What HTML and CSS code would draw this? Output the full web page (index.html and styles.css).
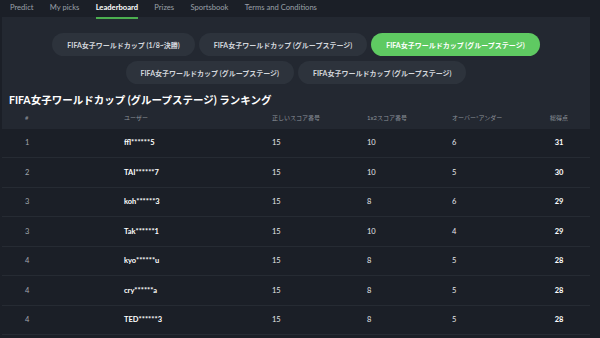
FILE: index.html
```html
<!DOCTYPE html>
<html lang="ja">
  <head>
    <meta charset="UTF-8">
    <title>Leaderboard</title>
    <link rel="stylesheet" href="styles.css">
  </head>
  <body>
    <nav class="tabs">
      <a class="tab">Predict</a>
      <a class="tab">My picks</a>
      <a class="tab active">Leaderboard</a>
      <a class="tab">Prizes</a>
      <a class="tab">Sportsbook</a>
      <a class="tab">Terms and Conditions</a>
    </nav>

    <main class="board">
      <section class="panel">
        <div class="rounds">
          <button class="round">FIFA女子ワールドカップ (1/8~決勝)</button>
          <button class="round">FIFA女子ワールドカップ (グループステージ)</button>
          <button class="round selected">FIFA女子ワールドカップ (グループステージ)</button>
          <button class="round">FIFA女子ワールドカップ (グループステージ)</button>
          <button class="round">FIFA女子ワールドカップ (グループステージ)</button>
        </div>
        <h2>FIFA女子ワールドカップ (グループステージ) ランキング</h2>
        <div class="row head">
          <span>#</span>
          <span>ユーザー</span>
          <span>正しいスコア番号</span>
          <span>1x2スコア番号</span>
          <span>オーバー*アンダー</span>
          <span class="pts">総得点</span>
        </div>
      </section>

      <div class="rows">
        <div class="row"><span class="rank">1</span><span class="user">ffl******5</span><span>15</span><span>10</span><span>6</span><span class="pts">31</span></div>
        <div class="row"><span class="rank">2</span><span class="user">TAI******7</span><span>15</span><span>10</span><span>5</span><span class="pts">30</span></div>
        <div class="row"><span class="rank">3</span><span class="user">koh******3</span><span>15</span><span>8</span><span>6</span><span class="pts">29</span></div>
        <div class="row"><span class="rank">3</span><span class="user">Tak******1</span><span>15</span><span>10</span><span>4</span><span class="pts">29</span></div>
        <div class="row"><span class="rank">4</span><span class="user">kyo******u</span><span>15</span><span>8</span><span>5</span><span class="pts">28</span></div>
        <div class="row"><span class="rank">4</span><span class="user">cry******a</span><span>15</span><span>8</span><span>5</span><span class="pts">28</span></div>
        <div class="row"><span class="rank">4</span><span class="user">TED******3</span><span>15</span><span>8</span><span>5</span><span class="pts">28</span></div>
      </div>
    </main>
  </body>
</html>
```

FILE: styles.css
```css
body {
  margin: 0;
  background: #1b1f27;
  color: #e6e8eb;
  font-family: Lato, "Noto Sans CJK JP", sans-serif;
  overflow: hidden;
}

.tabs {
  height: 17px;
  display: flex;
  gap: 16.3px;
  padding-left: 10px;
}

.tab {
  font-size: 7.6px;
  line-height: 14px;
  color: #9aa0a8;
  position: relative;
}

.tab.active {
  color: #ffffff;
  font-weight: 700;
}

.tab.active::after {
  content: "";
  position: absolute;
  left: 0;
  right: 0;
  bottom: -2px;
  height: 2px;
  background: #4caf50;
}

.board {
  width: 588px;
  margin-left: 2px;
}

.panel {
  background: #232831;
  padding-top: 16px;
}

.rounds {
  display: flex;
  flex-wrap: wrap;
  justify-content: center;
  gap: 5px 4px;
}

.round {
  height: 23px;
  padding: 0 15px;
  border: 0;
  border-radius: 12px;
  background: #2d333c;
  color: #d4d7dc;
  font-family: inherit;
  font-size: 7px;
  font-weight: 700;
}

.round.selected {
  background: #5fca62;
  color: #ffffff;
}

h2 {
  margin: 9px 0 0 7px;
  font-size: 10.5px;
  line-height: 14px;
  font-weight: 700;
  color: #ffffff;
}

.row {
  display: grid;
  grid-template-columns: 99px 148px 95px 85px 77px 60px;
  padding-left: 23px;
  align-items: center;
  height: 28.5px;
  border-bottom: 1px solid #262b33;
  font-size: 7.5px;
}

.row.head {
  height: 21.5px;
  border: 0;
  font-size: 6px;
  color: #8d939b;
}

.rank {
  color: #a3a8af;
}

.user, .pts {
  font-weight: 700;
  color: #ffffff;
}

.pts {
  text-align: center;
}

.head .pts {
  color: #8d939b;
  font-weight: 400;
}
```
